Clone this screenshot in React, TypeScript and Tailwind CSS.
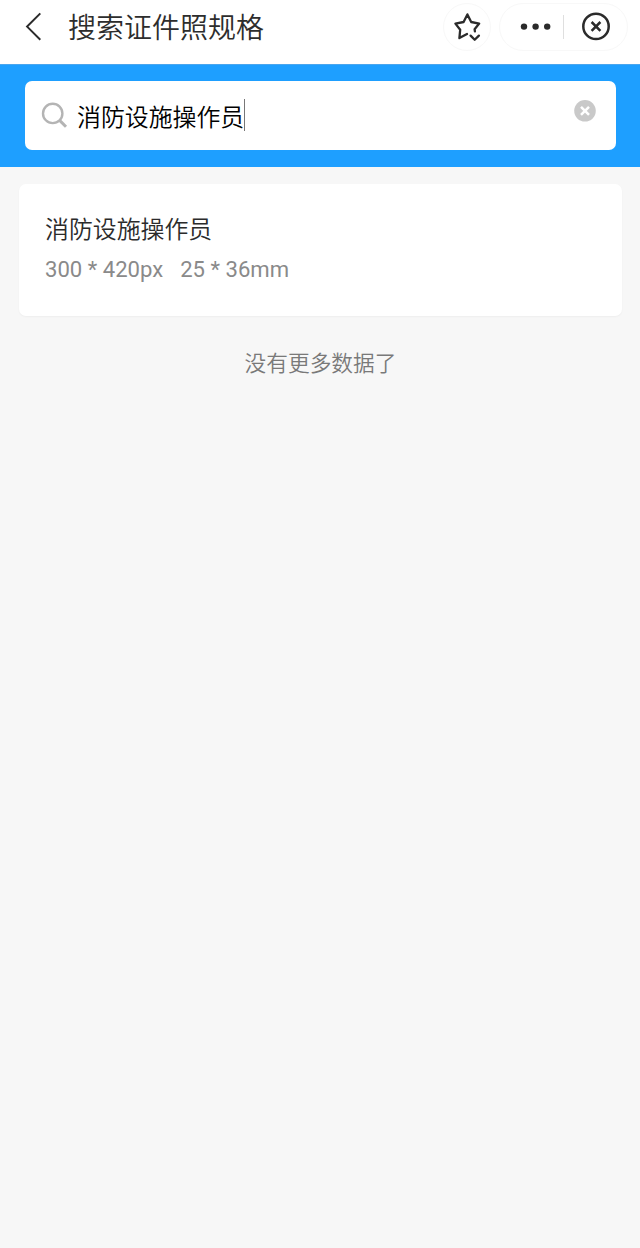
import React from "react";

const results = [{ name: "消防设施操作员", pixels: "300 * 420px", size: "25 * 36mm" }];

function BackIcon() {
  return (
    <svg className="w-6 h-8" viewBox="0 0 24 32" fill="none" stroke="#2b2b2b" strokeWidth="2">
      <path d="M18.3 3.4 5.1 16.6 18.3 29.8" />
    </svg>
  );
}

function StarIcon() {
  return (
    <svg
      className="w-8 h-8"
      viewBox="0 0 32 32"
      fill="none"
      stroke="#2b2b2b"
      strokeWidth="2.3"
      strokeLinecap="round"
      strokeLinejoin="round"
    >
      <path d="M16 23 8.4 27.1 9.2 18.7 4.4 12.6 12.6 11 16.4 3.4 20.2 11 28.2 12.6 23.6 18.2 23.9 20.3" />
      <path d="M19.6 24.6 23.7 28.7 27.9 24.6" />
    </svg>
  );
}

function CloseIcon() {
  return (
    <svg className="w-8 h-8" viewBox="0 0 32 32" fill="none" stroke="#2b2b2b" strokeWidth="2.5">
      <circle cx="16" cy="15.4" r="12.7" />
      <path d="M11.6 11 20.4 19.8M20.4 11 11.6 19.8" />
    </svg>
  );
}

function Header() {
  return (
    <header className="flex h-16 items-start bg-white pr-3">
      <div className="mt-[10px] ml-[22px]">
        <BackIcon />
      </div>
      <h1 className="mt-[9px] ml-[22px] text-[28px] leading-10 font-[350] text-[#2d2d2d]">搜索证件照规格</h1>

      <div className="mt-[3px] ml-auto flex gap-2">
        <button className="flex h-12 w-12 items-center justify-center rounded-full border border-[#f8f8f8]">
          <StarIcon />
        </button>
        <div className="flex h-12 w-[129px] items-center rounded-full border border-[#f8f8f8]">
          <svg className="ml-5 h-2 w-8 shrink-0" viewBox="0 0 32 8" fill="#2b2b2b">
            <circle cx="4" cy="3.6" r="3.2" />
            <circle cx="15.6" cy="3.6" r="3.2" />
            <circle cx="27.2" cy="3.6" r="3.2" />
          </svg>
          <div className="ml-[11px] h-6 w-px bg-[#dfdfdf]" />
          <button className="ml-4">
            <CloseIcon />
          </button>
        </div>
      </div>
    </header>
  );
}

function SearchBar() {
  return (
    <div className="h-[103px] border-t border-[#4ba6ee] bg-[#1e9fff] pt-4 pr-6 pl-[25px]">
      <div className="flex h-[69px] items-center rounded-[7px] bg-white pr-5 pl-4">
        <svg className="h-7 w-7" viewBox="0 0 28 28" fill="none" stroke="#b4b4b4" strokeWidth="2.4">
          <circle cx="11.7" cy="11.4" r="9.7" />
          <path d="M18.6 18.4 25 24.8" strokeWidth="3" />
        </svg>
        <div className="ml-2 flex h-8 items-center">
          <span className="mt-[4px] text-[23.9px] leading-8 font-[350] text-black">消防设施操作员</span>
          <span className="-mt-px h-8 w-px bg-[#777]" />
        </div>
        <svg className="-mt-[10px] ml-auto h-[22px] w-[22px]" viewBox="0 0 22 22" fill="none">
          <circle cx="11" cy="10.8" r="10.8" fill="#c9c9c9" />
          <path d="M7 6.8 15 14.8M15 6.8 7 14.8" stroke="white" strokeWidth="2.5" />
        </svg>
      </div>
    </div>
  );
}

export default function App() {
  return (
    <div className="min-h-screen bg-[#f7f7f7] font-['Roboto','Noto_Sans_CJK_SC',sans-serif]">
      <Header />
      <SearchBar />

      {/* 搜索结果 */}
      <main className="pt-[17px] pr-[18px] pl-[19px]">
        {results.map((item) => (
          <div key={item.name} className="h-[132px] rounded-[7px] bg-white px-[26px] pt-7 shadow-[0_1px_2px_rgba(0,0,0,0.04)]">
            <p className="text-[23.9px] leading-9 font-[350] text-[#2b2b2b]">{item.name}</p>
            <p className="mt-[6px] flex gap-[17px] text-[22.1px] leading-[30px] text-[#8a8a8a]">
              <span>{item.pixels}</span>
              <span>{item.size}</span>
            </p>
          </div>
        ))}
        <p className="mt-8 text-center text-[21.7px] leading-8 font-[350] text-[#797979]">没有更多数据了</p>
      </main>
    </div>
  );
}
